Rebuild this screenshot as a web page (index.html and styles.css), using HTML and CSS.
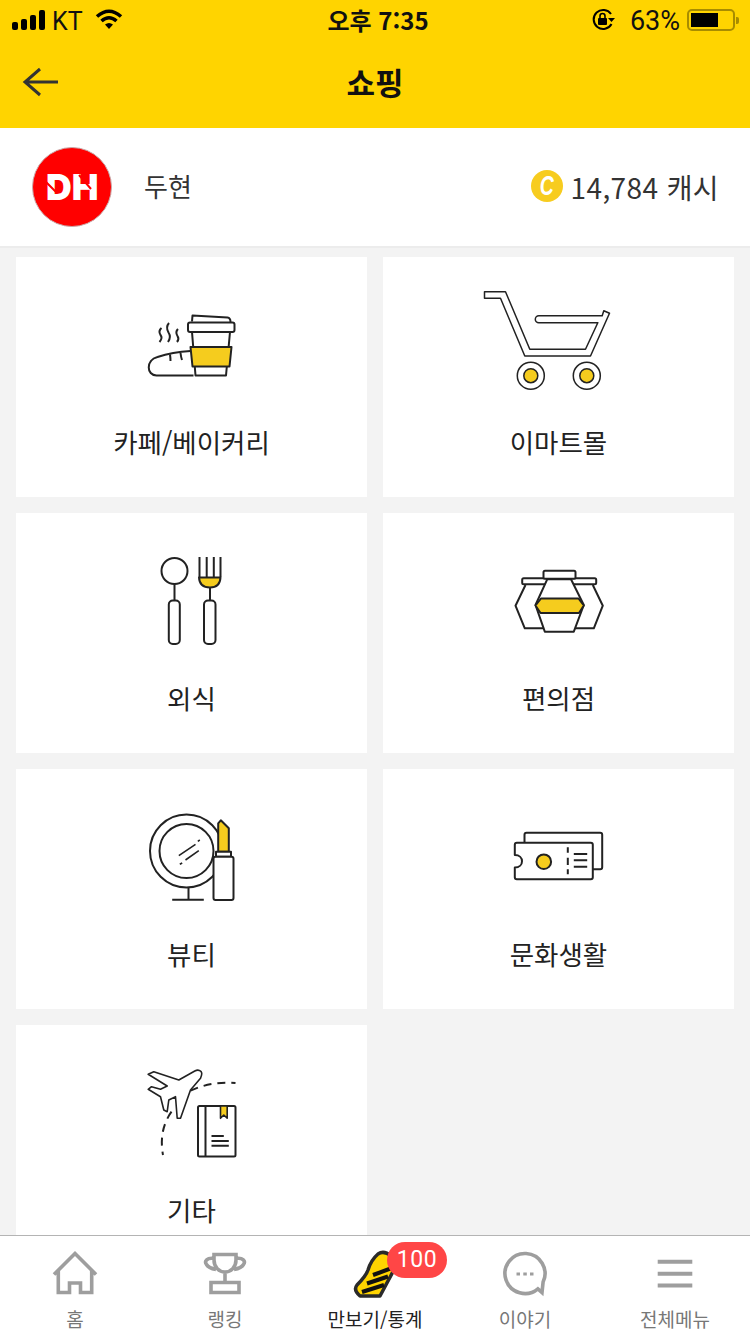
FILE: index.html
```html
<!DOCTYPE html>
<html lang="ko">
<head>
<meta charset="utf-8">
<title>쇼핑</title>
<link rel="stylesheet" href="styles.css">
</head>
<body>
<div class="top">
  <div class="status">
    <div class="status-left">
      <div class="signal"><i class="b1"></i><i class="b2"></i><i class="b3"></i><i class="b4"></i></div>
      <span class="carrier">KT</span>
      <svg class="wifi" viewBox="94 8 30 24"><path class="wf" d="M97 16.5Q109 6 121 16.5"/><path class="wf" d="M101.5 21Q109 14.500 116.500 21"/><path class="bk" d="M105 24.500Q109 21.500 113 24.500L109 29z"/></svg>
    </div>
    <div class="clock">오후 7:35</div>
    <div class="status-right">
      <svg class="rot" viewBox="590 7 28 26"><path class="rl" d="M611 14A9.500 9.500 0 1 0 611.500 24"/><path class="bk" d="M608 18h7l-3.500 4z"/><rect class="bk" x="598" y="18" width="9" height="7" rx="1"/><path class="rn" d="M600 18v-2a2.500 2.500 0 0 1 5 0v2"/></svg>
      <span class="pct">63%</span>
      <div class="battery"><div class="cell"><div class="charge"></div></div><div class="nub"></div></div>
    </div>
  </div>
  <header class="bar">
    <svg class="back" viewBox="22 64 38 34"><path d="M58 81H26M40 68L25 81L40 94"/></svg>
    <h1 class="title">쇼핑</h1>
    <span class="bar-end"></span>
  </header>
</div>

<section class="profile">
  <div class="who">
    <svg class="avatar" viewBox="32 148 80 80"><circle class="av" cx="72" cy="188" r="39.500"/><text class="dh" x="46" y="200.500" textLength="52.500" lengthAdjust="spacingAndGlyphs">DH</text><path class="cut" d="M45 182L56 193M79 176L91 190"/></svg>
    <span class="name">두현</span>
  </div>
  <div class="cash">
    <span class="coin"><span class="coin-c">C</span></span>
    <span class="amount">14,784 캐시</span>
  </div>
</section>

<main class="grid">
  <a class="card">
    <svg class="pic" viewBox="121.500 281 140 120">
      <path class="ln" d="M191.500 321.500L192 315.500L227 317.500Q230 318 230 322"/>
      <path class="ln" d="M191.500 332L195 375.500H225.500L229.500 332"/>
      <rect class="ln wh" x="187.500" y="322.500" width="46.500" height="9.500" rx="2"/>
      <path class="ln" d="M193 375.500H156C146 375.500 145 360 157 357Q172 352 190 351"/>
      <path class="ln" d="M169.500 354.500Q170 358 170 361M180 353Q180.500 357 181.500 360"/>
      <path class="ln" d="M161 328Q157.500 331 160 335Q162.500 338 159 342M168.500 323Q165 327 168 332.500Q171 337 167.500 342M177.500 329Q174.500 332 177 336Q179 339 176.500 342"/>
      <path class="ln ye" d="M190 347H231L229 366.500H192z"/>
    </svg>
    <span class="label">카페/베이커리</span>
  </a>
  <a class="card">
    <svg class="pic" viewBox="488.500 281 140 120">
      <path class="ln th" d="M484 291.700H505L529.300 349.300H585L597.300 322.700H538.300A3.500 3.500 0 0 1 538.300 315.700H601.700L603.300 310.700L609 313.300L590 356H524.300L500 298.300H484z"/>
      <circle class="ln th" cx="530.300" cy="375.700" r="13.500"/><circle class="ln ye th" cx="530.300" cy="375.700" r="7"/>
      <circle class="ln th" cx="586.300" cy="375.700" r="13.500"/><circle class="ln ye th" cx="586.300" cy="375.700" r="7"/>
    </svg>
    <span class="label">이마트몰</span>
  </a>
  <a class="card">
    <svg class="pic" viewBox="121.500 537 140 120">
      <circle class="ln" cx="174" cy="571" r="13"/>
      <path class="ln" d="M174 584V600M209.500 587V600M199 557V577M206.200 557V577M213.300 557V577M220 557V577"/>
      <rect class="ln" x="168.300" y="600.500" width="11" height="43.500" rx="4"/>
      <rect class="ln" x="203.500" y="600.500" width="11.500" height="43.500" rx="4"/>
      <path class="ln ye" d="M198.500 577.500H220Q219.500 587.500 209.500 587.500Q199 587.500 198.500 577.500z"/>
    </svg>
    <span class="label">외식</span>
  </a>
  <a class="card">
    <svg class="pic" viewBox="488.500 537 140 120">
      <path class="ln" d="M525 585L515 605.700L524.300 628.300H543M592.300 585L602.300 605.700L593.300 628.300H574"/>
      <rect class="ln wh" x="521.700" y="578.300" width="74" height="6" rx="1.500"/>
      <path class="ln wh" d="M546.700 579.300H570.500L583.300 605L573.300 631.700H544.300L535 605z"/>
      <rect class="ln wh" x="543" y="570.700" width="32" height="8" rx="1.500"/>
      <path class="ln ye" d="M540.500 598.500H578L583.300 605.500L578.500 613H540L535 605.500z"/>
    </svg>
    <span class="label">편의점</span>
  </a>
  <a class="card">
    <svg class="pic" viewBox="121.500 793 140 120">
      <circle class="ln" cx="186" cy="851" r="36.500"/>
      <circle class="ln" cx="186" cy="851" r="27"/>
      <path class="ln thin" d="M178.300 855.700L195 844.300M197.300 841.300L199.300 840M179.300 864.300L181.700 863M185 860L198.300 850.700"/>
      <path class="ln" d="M188 888V899.500M171.700 899.800H203.300"/>
      <path class="ln ye" d="M217.700 851.700V823.300L220.300 820.300L228.300 828.300V851.700z"/>
      <rect class="ln wh" x="215.500" y="851.700" width="15" height="5"/>
      <rect class="ln wh" x="213" y="856.700" width="20" height="43.300" rx="2"/>
    </svg>
    <span class="label">뷰티</span>
  </a>
  <a class="card">
    <svg class="pic" viewBox="488.500 793 140 120">
      <path class="ln" d="M524 842.700V834.700Q524 832.700 526 832.700H599.700Q601.700 832.700 601.700 834.700V867.300Q601.700 869.300 599.700 869.300H592.500"/>
      <path class="ln" d="M516.300 842.700H590.300Q592.300 842.700 592.300 844.700V877.300Q592.300 879.300 590.300 879.300H516.300Q514.300 879.300 514.300 877.300V867.500C519 867.500 521.500 864.500 521.500 861.200C521.500 858 519 855 514.300 855V844.700Q514.300 842.700 516.300 842.700z"/>
      <circle class="ln ye" cx="543.300" cy="861.700" r="7.300"/>
      <path class="ln" d="M567.300 847.300V852.700M567.300 857.700V865M567.300 869.300V874.300M573.300 854H586.700M573.300 860.300H586.700M573.300 866.700H586.700"/>
    </svg>
    <span class="label">문화생활</span>
  </a>
  <a class="card">
    <svg class="pic" viewBox="121.500 1049 140 120">
      <path class="ln" stroke-dasharray="8 6" d="M190 1090.700Q211 1081 235 1083"/>
      <path class="ln" stroke-dasharray="8 6" d="M171 1111.700Q158 1130 162.500 1155"/>
      <path class="ln wh thin" d="M194.300 1071L178.300 1080L153.300 1071.700L147.700 1074.300L166.700 1086L160 1089.300L151 1086.700L147.700 1089.300L160 1096.700L163.300 1110L166.700 1111.700L168.300 1100L175 1096.700L176.700 1118.300L180 1118.300L190 1090L200 1078.300Q203 1072 199 1070.500Q197 1069.500 194.300 1071z"/>
      <rect class="ln" x="197.500" y="1106" width="37.500" height="50.500" rx="1.500"/>
      <path class="ln" d="M205 1106V1156.500M211 1136H223.300M211 1141H228.300M211 1145.700H228.300"/>
      <path class="ln ye thin" d="M220 1106H226.700V1118.300L223.300 1115L220 1118.300z"/>
    </svg>
    <span class="label">기타</span>
  </a>
</main>

<nav class="tabs">
  <a class="tab">
    <svg class="tab-pic" viewBox="45 1246 60 56"><path class="nv" d="M58.300 1271V1292.500H69.500V1283H80.500V1292.500H91.700V1271M54 1274.500L75 1253.500L96 1274.500"/></svg>
    <span class="tab-label">홈</span>
  </a>
  <a class="tab">
    <svg class="tab-pic" viewBox="195 1246 60 56"><path class="nv" d="M214 1254.500H236V1260C236 1267 231 1272 225 1272C219 1272 214 1267 214 1260zM214 1258.500C207 1257.500 204 1261 206.500 1264.500Q208.500 1268 216 1269.500M236 1258.500C243 1257.500 246 1261 243.500 1264.500Q241.500 1268 234 1269.500M225 1272V1282.500M211 1282.500H239V1292.500H211z"/></svg>
    <span class="tab-label">랭킹</span>
  </a>
  <a class="tab tab-on">
    <svg class="tab-pic" viewBox="345 1246 60 56"><path class="sh" d="M378 1254Q384 1250 391 1256L396 1266L380 1296H360Q353 1290 357 1285Q366 1276 368 1270Q371 1260 378 1254z"/><path class="st" d="M362 1292L384 1285M367 1283.500L388 1276.500M373 1275L392 1268"/></svg>
    <span class="tab-label">만보기/통계</span>
    <span class="badge">100</span>
  </a>
  <a class="tab">
    <svg class="tab-pic" viewBox="495 1246 60 56"><path class="nv" d="M537.900 1288.800A20 20 0 1 1 543.100 1282L542 1292.500z"/><path class="dots" d="M516.500 1274H520M523.300 1274H526.800M530 1274H533.500"/></svg>
    <span class="tab-label">이야기</span>
  </a>
  <a class="tab">
    <svg class="tab-pic" viewBox="645 1246 60 56"><path class="nv nv-bar" d="M657.700 1261.700H692.300M657.700 1273.700H692.300M657.700 1285.500H692.300"/></svg>
    <span class="tab-label">전체메뉴</span>
  </a>
</nav>
</body>
</html>
```

FILE: styles.css
```css
* { box-sizing: border-box; margin: 0; padding: 0; }
html, body { width: 750px; height: 1334px; overflow: hidden; }
body {
  display: flex;
  flex-direction: column;
  background: #f3f3f3;
  color: #222;
  font-family: "Noto Sans CJK KR", "Noto Sans", sans-serif;
}

.top { background: #ffd400; height: 128px; flex: none; }
.status {
  height: 40px;
  display: grid;
  grid-template-columns: 1fr auto 1fr;
  align-items: center;
  padding: 0 12px;
  color: #111;
}
.status-left { display: flex; align-items: center; }
.signal { display: flex; align-items: flex-end; gap: 3px; height: 20px; }
.signal i { display: block; width: 6px; background: #000; border-radius: 2px; }
.b1 { height: 8px; }
.b2 { height: 11px; }
.b3 { height: 15px; }
.b4 { height: 20px; }
.carrier { font-family: Roboto, sans-serif; font-size: 25px; margin: 3px 0 0 7px; }
.wifi { width: 30px; height: 24px; margin-left: 11px; }
.wf { fill: none; stroke: #000; stroke-width: 3.6; }
.bk { fill: #000; }
.clock { font-size: 24px; font-weight: 700; line-height: 40px; padding-left: 6px; margin-top: -1px; }
.status-right { display: flex; align-items: center; justify-content: flex-end; }
.rot { width: 28px; height: 26px; margin-right: 12px; margin-left: -1px; }
.rl { fill: none; stroke: #000; stroke-width: 2; }
.rn { fill: none; stroke: #000; stroke-width: 1.6; }
.pct { font-family: Roboto, sans-serif; font-size: 27px; margin: 2px 7px 0 0; }
.battery { display: flex; align-items: center; gap: 1px; margin-right: -1px; }
.cell { width: 48px; height: 22px; border: 2px solid #a88c00; border-radius: 5px; padding: 2px; }
.charge { width: 27px; height: 100%; background: #000; }
.nub { width: 3px; height: 7px; background: #a88c00; border-radius: 0 2px 2px 0; }

.bar {
  height: 88px;
  padding: 0 22px 4px;
  display: grid;
  grid-template-columns: 1fr auto 1fr;
  align-items: center;
}
.back { width: 38px; height: 34px; }
.back path { fill: none; stroke: #333; stroke-width: 3; }
.title { font-size: 31px; font-weight: 700; color: #111; line-height: 44px; }

.profile {
  flex: none;
  height: 120px;
  background: #fff;
  border-bottom: 2px solid #ececec;
  padding: 0 31px 0 32px;
  display: flex;
  align-items: center;
  justify-content: space-between;
}
.who { display: flex; align-items: center; gap: 32px; }
.avatar { width: 80px; height: 80px; display: block; }
.av { fill: #ff0000; stroke: #c9a9a9; stroke-width: 1; }
.dh { font-family: Inter, "Liberation Sans", sans-serif; font-weight: 900; font-size: 36px; fill: #fff; }
.cut { fill: none; stroke: #ff0000; stroke-width: 2; }
.name { font-size: 26px; color: #333; line-height: 36px; margin-top: -2px; }
.cash { display: flex; align-items: center; gap: 9px; }
.coin {
  width: 32px;
  height: 32px;
  border-radius: 50%;
  background: #f7cc1f;
  color: #fff;
  display: flex;
  align-items: center;
  justify-content: center;
  margin-top: -2px;
}
.coin-c {
  font-family: "Liberation Sans", sans-serif;
  font-style: italic;
  font-weight: 700;
  font-size: 27px;
  line-height: 32px;
  transform: scaleX(.72);
}
.amount { font-size: 28px; color: #333; line-height: 36px; letter-spacing: .4px; margin-left: -1px; }

.grid {
  flex: 1;
  min-height: 0;
  overflow: hidden;
  display: grid;
  grid-template-columns: 1fr 1fr;
  grid-auto-rows: 240px;
  gap: 16px;
  padding: 9px 16px 0;
  align-content: start;
}
.card { background: #fff; display: flex; flex-direction: column; align-items: center; }
.pic { width: 140px; height: 120px; margin-top: 24px; flex: none; display: block; overflow: visible; }
.label { font-size: 26.5px; line-height: 36px; margin-top: 23px; color: #222; }

.ln { fill: none; stroke: #222; stroke-width: 2; stroke-linejoin: round; }
.th { stroke-width: 1.5; }
.thin { stroke-width: 1.6; }
.wh { fill: #fff; }
.ye { fill: #f5cc1e; }

.tabs {
  flex: none;
  height: 99px;
  background: #fff;
  border-top: 1px solid #b4b4b4;
  display: grid;
  grid-template-columns: repeat(5, 1fr);
}
.tab { position: relative; display: flex; flex-direction: column; align-items: center; padding-top: 10px; }
.tab-pic { width: 60px; height: 56px; display: block; flex: none; overflow: visible; }
.tab-label { font-size: 19px; line-height: 24px; margin-top: 5px; color: #777; white-space: nowrap; }
.tab-on .tab-label { color: #222; }
.nv { fill: none; stroke: #9e9e9e; stroke-width: 3.6; }
.nv-bar { stroke-width: 4; }
.dots { fill: none; stroke: #9e9e9e; stroke-width: 3; }
.sh { fill: #ffd400; stroke: #2a2a2a; stroke-width: 3.5; stroke-linejoin: round; }
.st { fill: none; stroke: #111; stroke-width: 4; }
.badge {
  position: absolute;
  left: 87px;
  top: 6px;
  width: 60px;
  height: 36px;
  border-radius: 18px;
  background: #ff4646;
  color: #fff;
  font-family: Roboto, sans-serif;
  font-size: 23px;
  line-height: 36px;
  text-align: center;
  letter-spacing: .5px;
}
```
